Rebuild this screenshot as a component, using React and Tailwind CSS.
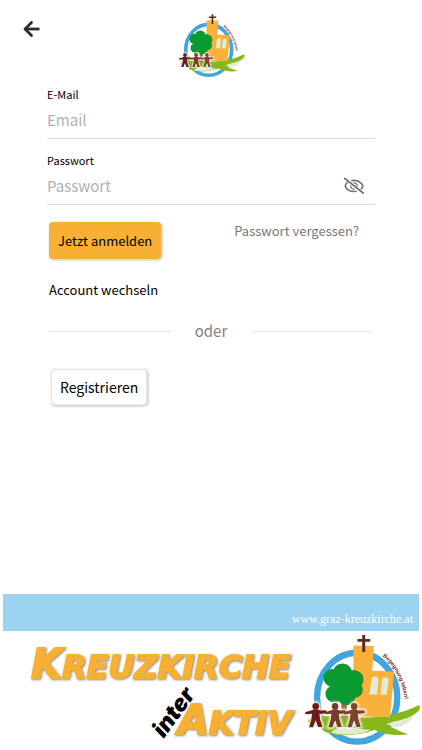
import React, { useState } from "react";

const skin = "font-['Noto_Sans_CJK_SC',sans-serif]";

function ArrowLeftIcon() {
  return (
    <svg viewBox="0 0 18 18" className="w-[18px] h-[18px]" fill="none" stroke="#2b2b2b" strokeWidth="2.8">
      <path d="M17.500 9H3" />
      <path d="M9.500 2.500 3 9 9.500 15.500" strokeLinecap="round" strokeLinejoin="round" />
    </svg>
  );
}

function EyeOffIcon() {
  return (
    <svg viewBox="0 0 22 18" className="w-[22px] h-[18px]" fill="none" stroke="#707070" strokeWidth="1.600">
      <path d="M1.200 1 20.800 16.500" />
      <path d="M8.300 3.600C14 2.600 18.800 5 19.800 9c-.3 1.300-.9 2.300-1.800 3.100" />
      <path d="M4.600 5.200C3.300 6.200 2.500 7.500 2.200 9c1 4 5.800 6.300 11.500 5.300" />
      <path d="M10.500 5.900a3.500 3.500 0 0 1 3.800 3.500M7.600 8.500a3.500 3.500 0 0 0 3.900 3.700" strokeWidth="1.200" />
    </svg>
  );
}

function Person({ x, fill }) {
  return (
    <g transform={`translate(${x} 214)`} fill={fill}>
      <circle cx="0" cy="11" r="10" />
      <path d="M-5 20 H5 L14 24 L31 23 L32 31 L15 34 L11 33 L13 50 L20 73 H7 L0 53 L-8 74 H-20 L-13 50 L-11 33 L-15 34 L-31 35 L-31 28 L-14 24Z" />
    </g>
  );
}

function Emblem({ id, className }) {
  return (
    <svg viewBox="0 0 366 356" className={className} role="img" aria-label="Kreuzkirche">
      <defs>
        <filter id={`${id}-glow`} x="-20%" y="-20%" width="140%" height="140%">
          <feGaussianBlur stdDeviation="3" />
        </filter>
        <path id={`${id}-arc`} d="M247 76 Q302 118 315 215" />
      </defs>
      <ellipse cx="171" cy="198" rx="120" ry="133" fill="#fff" stroke="#42a5dc" strokeWidth="19" />
      <path d="M24 266C60 246 110 256 150 258C220 262 290 254 356 221Q364 232 350 243C325 264 292 271 258 278C277 290 297 300 324 309C285 315 250 308 222 296C180 311 125 317 85 305C60 298 72 289 46 284Q22 278 24 266Z" fill="#86b81c" />
      <path d="M93 304C103 290 127 284 153 288C173 291 187 296 213 295C182 309 130 315 93 304Z" fill="#e2ead0" />
      <path d="M258 278C290 266 319 265 340 251C336 269 315 282 287 289Z" fill="#e2ead0" />
      <path d="M160 43L221 45L216 119L282 121L269 258L158 255Z" fill="#f9b13c" />
      <path d="M208 190L213 148Q215 135 225 135Q236 136 235 150L231 190Z M240 191L244 149Q246 137 256 138Q267 139 265 151L259 191Z" fill="#e5ebcf" />
      <path d="M186 12H195V24H210V32H195V63H186V32H172V24H186Z" fill="#5b2d1c" />
      <path d="M123 212L139 217L143 252L151 259H117L125 250Z" fill="#a66b3c" />
      <g>
        {[
          { fill: "#3f7a2c", move: "translate(3 1)" },
          { fill: "#0a9a32", move: "translate(0 0)" },
        ].map(({ fill, move }) => (
          <g key={fill} fill={fill} transform={move}>
            <circle cx="126" cy="124" r="27" />
            <circle cx="96" cy="140" r="26" />
            <circle cx="160" cy="144" r="27" />
            <circle cx="101" cy="188" r="25" />
            <circle cx="160" cy="174" r="25" />
            <circle cx="137" cy="196" r="25" />
            <circle cx="126" cy="162" r="34" />
          </g>
        ))}
      </g>
      <g filter={`url(#${id}-glow)`} stroke="#fff" strokeWidth="8">
        <Person x={47} fill="#fff" />
        <Person x={105} fill="#fff" />
        <Person x={162} fill="#fff" />
      </g>
      <Person x={47} fill="#6e1a1d" />
      <Person x={105} fill="#7c3a2a" />
      <Person x={162} fill="#80432c" />
      <text fill="#822330" fontSize="17" fontWeight="bold" fontFamily="Liberation Sans, sans-serif">
        <textPath href={`#${id}-arc`}>Begegnung leben!</textPath>
      </text>
    </svg>
  );
}

function Wordmark() {
  return (
    <svg viewBox="0 0 300 119" className="flex-1 min-w-0" role="img" aria-label="Kreuzkirche interAktiv">
      <g
        className="drop-shadow-[1px_1px_1px_#8f8780]"
        fill="#f7b032"
        stroke="#f7b032"
        strokeWidth="1.800"
        fontFamily="DejaVu Sans, sans-serif"
        fontWeight="bold"
        fontStyle="italic"
      >
        <text x="31" y="47" fontSize="40">
          K<tspan fontSize="32">REUZKIRCHE</tspan>
        </text>
        <text x="178" y="103" fontSize="40">
          A<tspan fontSize="32">KTIV</tspan>
        </text>
      </g>
      <text
        transform="translate(164 108) rotate(-54)"
        fontSize="23"
        fontFamily="Inter, sans-serif"
        fontWeight="900"
        fontStyle="italic"
      >
        inter
      </text>
    </svg>
  );
}

function Field({ id, label, children, ...inputProps }) {
  return (
    <div className="border-b border-[#dcdcdc]">
      <label htmlFor={id} className="block text-[11px] leading-4 text-black">
        {label}
      </label>
      <div className="flex items-center h-9 pr-2.5">
        <input
          id={id}
          className="flex-1 min-w-0 bg-transparent text-[15px] leading-6 outline-none placeholder:text-[#b0b0b0]"
          {...inputProps}
        />
        {children}
      </div>
    </div>
  );
}

export default function App() {
  const [showPassword, setShowPassword] = useState(false);

  return (
    <div className={`min-h-screen flex flex-col bg-white text-black ${skin}`}>
      <header className="grid grid-cols-3 items-start pt-3 px-[22px]">
        <button aria-label="Zurück" className="mt-2 w-[18px]">
          <ArrowLeftIcon />
        </button>
        <Emblem id="top" className="w-[70px] justify-self-center" />
      </header>

      <form className="px-[47px] pt-1.5" onSubmit={(e) => e.preventDefault()}>
        <div className="flex flex-col gap-[13px]">
          <Field id="email" label="E-Mail" type="email" placeholder="Email" />
          <Field
            id="password"
            label="Passwort"
            type={showPassword ? "text" : "password"}
            placeholder="Passwort"
          >
            <button
              type="button"
              aria-label="Passwort anzeigen"
              onClick={() => setShowPassword(!showPassword)}
            >
              <EyeOffIcon />
            </button>
          </Field>
        </div>

        <div className="flex justify-between items-start mt-[17px] pl-0.5 pr-4">
          <button
            type="submit"
            className="h-[37px] px-[9px] rounded bg-[#f7b034] text-[13px] shadow-[1px_1px_2px_1px_rgba(0,0,0,0.15)]"
          >
            Jetzt anmelden
          </button>
          <a href="#" className="text-[13px] leading-[18px] text-[#777777]">
            Passwort vergessen?
          </a>
        </div>

        <a href="#" className="block w-fit mt-5 ml-0.5 text-[13px] leading-[22px]">
          Account wechseln
        </a>

        <div className="flex items-center gap-6 mt-[18px] px-0.5 text-[#808080]">
          <div className="flex-1 h-px bg-[#e8e8e8]" />
          <span className="text-[15px] leading-6">oder</span>
          <div className="flex-1 h-px bg-[#e8e8e8]" />
        </div>

        <button
          type="button"
          className="h-9 mt-[26px] ml-1 px-2 rounded border border-[#e4e4e4] bg-white text-[14px] shadow-[1px_1px_2px_1px_rgba(0,0,0,0.15)]"
        >
          Registrieren
        </button>
      </form>

      <footer className="mt-auto">
        <div className="flex justify-end items-end h-[37px] mx-[3px] px-1.5 pb-1 bg-[#9bd3f0]">
          <a href="#" className="font-['Liberation_Serif',serif] text-xs leading-4 text-white">
            www.graz-kreuzkirche.at
          </a>
        </div>
        <div className="flex items-start">
          <Wordmark />
          <Emblem id="bottom" className="w-[29%]" />
        </div>
      </footer>
    </div>
  );
}
